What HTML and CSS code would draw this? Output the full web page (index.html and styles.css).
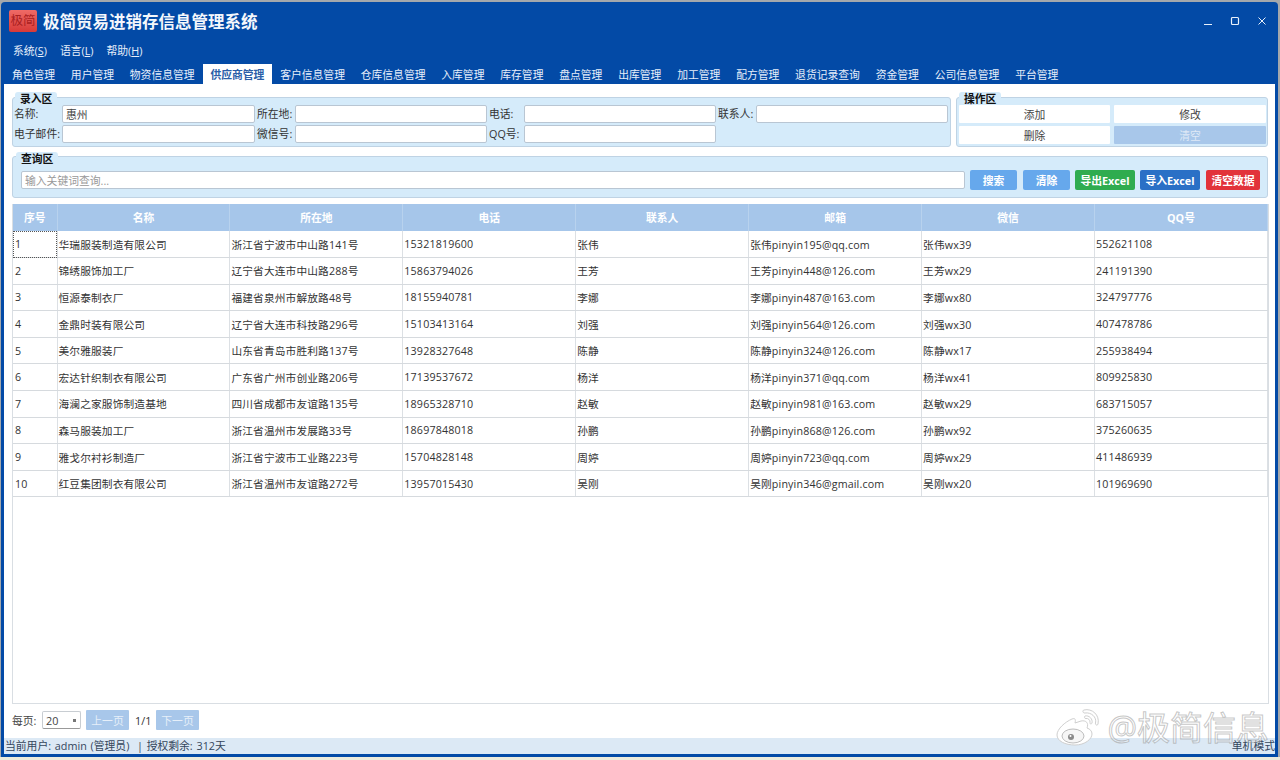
FILE: index.html
```html
<!DOCTYPE html>
<html lang="zh-CN">
<head>
    <meta charset="UTF-8">
    <meta name="viewport" content="width=device-width, initial-scale=1.0">
    <title>极简贸易进销存信息管理系统</title>
    <link rel="stylesheet" href="styles.css">
</head>
<body>
    <div class="window">
        <div class="titlebar">
            <div class="logo">极简</div>
            <h1>极简贸易进销存信息管理系统</h1>
            <div class="win-buttons">
                <svg width="10" height="10" viewBox="0 0 10 10"><path d="M1 8.5H9" stroke="#e8f0fa" stroke-width="1" fill="none"/></svg>
                <svg width="10" height="10" viewBox="0 0 10 10"><rect x="1.5" y="1.5" width="7" height="7" rx="1" stroke="#e8f0fa" stroke-width="1.2" fill="none"/></svg>
                <svg width="10" height="10" viewBox="0 0 10 10"><path d="M1.5 1.5L8.5 8.5M8.5 1.5L1.5 8.5" stroke="#e8f0fa" stroke-width="1" fill="none"/></svg>
            </div>
        </div>

        <div class="menubar">
            <span>系统(<u>S</u>)</span>
            <span>语言(<u>L</u>)</span>
            <span>帮助(<u>H</u>)</span>
        </div>

        <div class="tabs">
            <a>角色管理</a>
            <a>用户管理</a>
            <a>物资信息管理</a>
            <a class="active">供应商管理</a>
            <a>客户信息管理</a>
            <a>仓库信息管理</a>
            <a>入库管理</a>
            <a>库存管理</a>
            <a>盘点管理</a>
            <a>出库管理</a>
            <a>加工管理</a>
            <a>配方管理</a>
            <a>退货记录查询</a>
            <a>资金管理</a>
            <a>公司信息管理</a>
            <a>平台管理</a>
        </div>

        <div class="client">
            <div class="top-row">
                <div class="group entry">
                    <div class="group-title">录入区</div>
                    <div class="entry-grid">
                        <label>名称:</label><input type="text" value="惠州">
                        <label class="pad">所在地:</label><input type="text">
                        <label class="pad">电话:</label><input type="text">
                        <label class="pad">联系人:</label><input type="text">
                        <label>电子邮件:</label><input type="text">
                        <label class="pad">微信号:</label><input type="text">
                        <label class="pad">QQ号:</label><input type="text">
                    </div>
                </div>
                <div class="group ops">
                    <div class="group-title">操作区</div>
                    <div class="ops-grid">
                        <button>添加</button>
                        <button>修改</button>
                        <button>删除</button>
                        <button class="disabled">清空</button>
                    </div>
                </div>
            </div>

            <div class="group query">
                <div class="group-title">查询区</div>
                <div class="query-row">
                    <input type="text" placeholder="输入关键词查询...">
                    <button class="act light wide">搜索</button>
                    <button class="act light">清除</button>
                    <button class="act green">导出Excel</button>
                    <button class="act blue">导入Excel</button>
                    <button class="act red">清空数据</button>
                </div>
            </div>

            <div class="table-box">
                <table>
                    <thead>
                        <tr>
                            <th class="col-no">序号</th>
                            <th>名称</th>
                            <th>所在地</th>
                            <th>电话</th>
                            <th>联系人</th>
                            <th>邮箱</th>
                            <th>微信</th>
                            <th>QQ号</th>
                        </tr>
                    </thead>
                    <tbody>
                        <tr><td class="focus">1</td><td>华瑞服装制造有限公司</td><td>浙江省宁波市中山路141号</td><td>15321819600</td><td>张伟</td><td>张伟pinyin195@qq.com</td><td>张伟wx39</td><td>552621108</td></tr>
                        <tr><td>2</td><td>锦绣服饰加工厂</td><td>辽宁省大连市中山路288号</td><td>15863794026</td><td>王芳</td><td>王芳pinyin448@126.com</td><td>王芳wx29</td><td>241191390</td></tr>
                        <tr><td>3</td><td>恒源泰制衣厂</td><td>福建省泉州市解放路48号</td><td>18155940781</td><td>李娜</td><td>李娜pinyin487@163.com</td><td>李娜wx80</td><td>324797776</td></tr>
                        <tr><td>4</td><td>金鼎时装有限公司</td><td>辽宁省大连市科技路296号</td><td>15103413164</td><td>刘强</td><td>刘强pinyin564@126.com</td><td>刘强wx30</td><td>407478786</td></tr>
                        <tr><td>5</td><td>美尔雅服装厂</td><td>山东省青岛市胜利路137号</td><td>13928327648</td><td>陈静</td><td>陈静pinyin324@126.com</td><td>陈静wx17</td><td>255938494</td></tr>
                        <tr><td>6</td><td>宏达针织制衣有限公司</td><td>广东省广州市创业路206号</td><td>17139537672</td><td>杨洋</td><td>杨洋pinyin371@qq.com</td><td>杨洋wx41</td><td>809925830</td></tr>
                        <tr><td>7</td><td>海澜之家服饰制造基地</td><td>四川省成都市友谊路135号</td><td>18965328710</td><td>赵敏</td><td>赵敏pinyin981@163.com</td><td>赵敏wx29</td><td>683715057</td></tr>
                        <tr><td>8</td><td>森马服装加工厂</td><td>浙江省温州市发展路33号</td><td>18697848018</td><td>孙鹏</td><td>孙鹏pinyin868@126.com</td><td>孙鹏wx92</td><td>375260635</td></tr>
                        <tr><td>9</td><td>雅戈尔衬衫制造厂</td><td>浙江省宁波市工业路223号</td><td>15704828148</td><td>周婷</td><td>周婷pinyin723@qq.com</td><td>周婷wx29</td><td>411486939</td></tr>
                        <tr><td>10</td><td>红豆集团制衣有限公司</td><td>浙江省温州市友谊路272号</td><td>13957015430</td><td>吴刚</td><td>吴刚pinyin346@gmail.com</td><td>吴刚wx20</td><td>101969690</td></tr>
                    </tbody>
                </table>
            </div>

            <div class="pager">
                <span class="page-label">每页:</span>
                <div class="combo">20<i></i></div>
                <button class="page-btn">上一页</button>
                <span class="page-num">1/1</span>
                <button class="page-btn">下一页</button>
            </div>
        </div>

        <div class="statusbar">
            <span>当前用户: admin (管理员) &nbsp;| 授权剩余: 312天</span>
            <span>单机模式</span>
        </div>
    </div>

    <!-- 水印 -->
    <div class="watermark">
        <svg width="46" height="38" viewBox="0 0 46 38" fill="none" stroke="#cfcfcf" stroke-width="1">
            <path d="M16 11C9 14 1 21 1 27C1 33 9 37 19 37C29 37 36 31 36 26C36 23 34 21 31 20C33 15 30 12 25 13L19 15C20 11 19 10 16 11Z" fill="#fff"/>
            <ellipse cx="17" cy="28" rx="11" ry="7" fill="#f6f6f6" stroke="#bdbdbd"/>
            <circle cx="15" cy="29" r="3" fill="#8a8a8a" stroke="none"/>
            <circle cx="14.500" cy="28" r="1" fill="#fff" stroke="none"/>
            <path d="M28 2C36 0 44 7 42 16C41.500 18 39 17 39.500 15C41 9 35 4 29 5C27 5.500 26 2.500 28 2Z" fill="#fff"/>
            <path d="M29 8C33 7 37 11 36 15C35.500 16.500 33.500 16 34 14.500C34.500 12 32 10 30 10.500C28.500 11 28 8.500 29 8Z" fill="#fff"/>
        </svg>
        <span>@极简信息</span>
    </div>
</body>
</html>
```

FILE: styles.css
```css
* {
    box-sizing: border-box;
}
html, body {
    height: 100%;
}
body {
    margin: 0;
    padding: 2px 2px 3px 1px;
    background: linear-gradient(#a4a8ac 0 757px, #ecebdc 757px);
    font-family: "Open Sans", "Noto Sans CJK SC", sans-serif;
    font-size: 10.8px;
    color: #333;
    overflow: hidden;
    position: relative;
}
.window {
    height: 755px;
    background-color: #034aa6;
    border-radius: 4px 4px 0 0;
    display: flex;
    flex-direction: column;
    padding: 0 3px 3px 3px;
}
.titlebar {
    height: 38px;
    display: flex;
    align-items: center;
    padding-left: 5px;
    flex-shrink: 0;
}
.logo {
    width: 28px;
    height: 22px;
    margin-right: 6px;
    background: linear-gradient(#ef6a66, #d83a38);
    border-radius: 2px;
    color: #a9201f;
    font-size: 12.5px;
    line-height: 22px;
    text-align: center;
    white-space: nowrap;
}
.titlebar h1 {
    margin: 0;
    font-size: 16.5px;
    font-weight: bold;
    color: #f4f7fc;
}
.win-buttons {
    margin-left: auto;
    display: flex;
    gap: 17px;
    padding-right: 8px;
}
.menubar {
    height: 24px;
    display: flex;
    align-items: center;
    gap: 13px;
    padding: 0 0 4px 9px;
    color: #e6eefa;
    flex-shrink: 0;
}
.tabs {
    height: 20px;
    display: flex;
    flex-shrink: 0;
    color: #e6eefa;
}
.tabs a {
    padding: 0 7.9px;
    line-height: 22px;
    white-space: nowrap;
}
.tabs .active {
    background-color: #fff;
    color: #2a5ea8;
    font-weight: bold;
}
.client {
    flex: 1;
    min-height: 0;
    background-color: #fff;
    display: flex;
    flex-direction: column;
    padding: 13px 7px 8px 8px;
}
.top-row {
    display: flex;
    gap: 5px;
}
.group {
    background-color: #d5ebfa;
    border: 1px solid #bfd3e4;
    border-radius: 3px;
}
.group-title {
    width: fit-content;
    height: 13px;
    line-height: 13px;
    margin: -6px 0 0 1px;
    padding: 0 5px;
    background-color: #d5ebfa;
    border-radius: 3px 3px 0 0;
    font-weight: bold;
    color: #111;
}
.entry {
    width: 939px;
    height: 50px;
    padding: 0 1px;
}
.entry-grid {
    display: grid;
    grid-template-columns: 48px 193px 40px 192px 37px 192px 40px 192px;
    row-gap: 2px;
}
.entry-grid label {
    height: 18px;
    line-height: 18px;
    white-space: nowrap;
}
.entry-grid .pad {
    padding-left: 2px;
}
input[type="text"] {
    height: 18px;
    min-width: 0;
    width: 100%;
    padding: 0 3px;
    border: 1px solid #b9c6d3;
    border-radius: 2px;
    background-color: #fff;
    font-family: inherit;
    font-size: 10.8px;
    color: #444;
    outline: none;
}
.ops {
    width: 312px;
    height: 50px;
    padding: 0 1px 0 2px;
}
.ops .group-title {
    margin-left: 0;
}
.ops-grid {
    display: grid;
    grid-template-columns: 151px 152px;
    gap: 3px 4px;
}
.ops-grid button {
    height: 18px;
    border: none;
    border-radius: 1px;
    background-color: #fff;
    font-family: inherit;
    font-size: 10.8px;
    color: #444;
    padding: 0;
}
.ops-grid .disabled {
    background-color: #a8c7ea;
    color: #dfe9f6;
}
.query {
    height: 42px;
    margin-top: 9px;
    padding: 0 7px 0 8px;
}
.query .group-title {
    margin-top: -5px;
    margin-left: -5px;
}
.query-row {
    margin-top: 5px;
    display: flex;
    align-items: center;
    gap: 5px;
}
.query-row input {
    flex: 1;
    height: 18px;
    color: #888;
}
.query-row input::placeholder {
    color: #999;
}
.act {
    height: 20px;
    width: 47px;
    border: none;
    border-radius: 2px;
    color: #fff;
    font-family: inherit;
    font-size: 10.8px;
    font-weight: bold;
    padding: 0;
    white-space: nowrap;
}
.light {
    background-color: #66a8ec;
}
.wide {
    margin-right: 1px;
}
.green {
    width: 60px;
    background-color: #2fac4f;
}
.blue {
    width: 60px;
    background-color: #2a70c6;
}
.red {
    width: 54px;
    margin-left: 1px;
    background-color: #e2333a;
}
.table-box {
    flex: 1;
    min-height: 0;
    margin: 6px -1px 0 0;
    border: 1px solid #d9dee3;
    border-top: none;
}
table {
    width: 100%;
    border-collapse: collapse;
    table-layout: fixed;
}
th {
    height: 27px;
    background-color: #a6c6ea;
    border-right: 1px solid #b8d2ee;
    color: #fff;
    font-weight: bold;
    font-size: 10.8px;
    padding: 0 0 2px;
}
th.col-no {
    width: 44px;
}
td {
    height: 26.6px;
    padding: 0 1px;
    border-right: 1px solid #dce0e4;
    border-bottom: 1px solid #d6dade;
    white-space: nowrap;
    overflow: hidden;
    font-size: 10.7px;
    letter-spacing: 0.15px;
    color: #333;
}
td:first-child {
    padding-left: 2px;
}
td.focus {
    outline: 1px dotted #555;
    outline-offset: -1px;
}
.pager {
    height: 20px;
    margin-top: 6px;
    display: flex;
    align-items: center;
    flex-shrink: 0;
    color: #444;
}
.page-label {
    width: 29px;
}
.combo {
    width: 39px;
    height: 18px;
    margin-left: 1px;
    padding-left: 3px;
    line-height: 17px;
    border: 1px solid #c8cdd2;
    border-bottom-color: #999;
    border-radius: 2px;
    position: relative;
}
.combo i {
    position: absolute;
    right: 4px;
    top: 7px;
    width: 3px;
    height: 3px;
    background-color: #777;
}
.page-btn {
    width: 43px;
    height: 20px;
    margin-left: 5px;
    border: none;
    border-radius: 1px;
    background-color: #a8c7ea;
    color: #e6eff9;
    font-family: inherit;
    font-size: 10.8px;
    padding: 0;
}
.page-num {
    margin-left: 6px;
    width: 17px;
    color: #333;
}
.page-num + .page-btn {
    margin-left: 4px;
}
.statusbar {
    height: 16px;
    flex-shrink: 0;
    background-color: #dce9f5;
    display: flex;
    justify-content: space-between;
    align-items: center;
    padding: 0 0 2px 1px;
    color: #34465c;
    white-space: nowrap;
    word-spacing: 1px;
}
.watermark {
    position: absolute;
    right: 11px;
    top: 708px;
    height: 34px;
    display: flex;
    align-items: flex-start;
    gap: 5px;
    pointer-events: none;
}
.watermark span {
    font-size: 33px;
    line-height: 30px;
    margin-top: 5px;
    color: rgba(255,255,255,0.35);
    -webkit-text-stroke: 1px rgba(150,150,150,0.55);
    white-space: nowrap;
}
```
